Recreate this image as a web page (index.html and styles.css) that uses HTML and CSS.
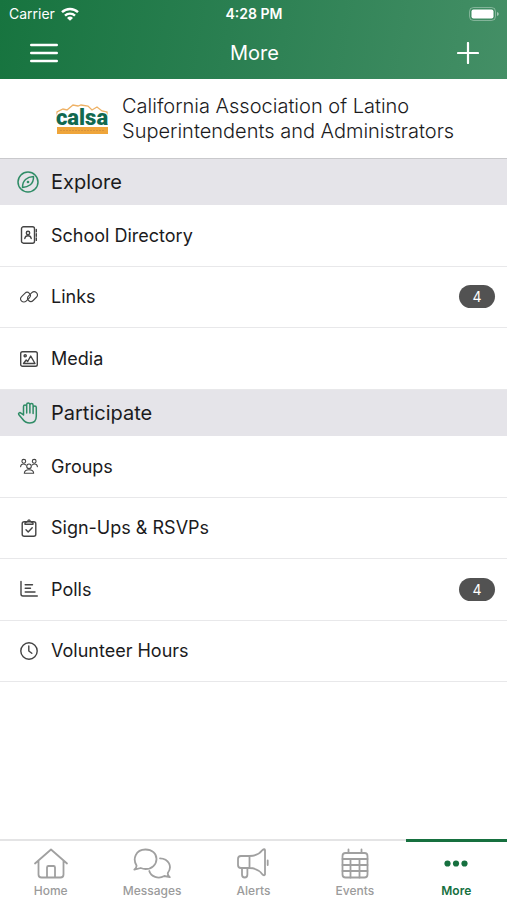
FILE: index.html
```html
<!DOCTYPE html>
<html lang="en">
<head>
<meta charset="utf-8">
<meta name="viewport" content="width=device-width, initial-scale=1">
<title>More</title>
<link rel="stylesheet" href="styles.css">
</head>
<body>
<header class="top">
  <div class="status">
    <span class="carrier">Carrier
      <svg class="wifi" viewBox="0 0 18 14" aria-hidden="true"><g fill="none" stroke="#fff" stroke-width="2.4"><path d="M1 5.2a11.500 11.500 0 0 1 16 0"/><path d="M4 8.600a7.200 7.200 0 0 1 10 0"/></g><path d="M9 13.800 6 11a4.300 4.300 0 0 1 6 0z" fill="#fff"/></svg>
    </span>
    <span class="time">4:28 PM</span>
    <svg class="battery" viewBox="0 0 30 14" aria-hidden="true"><rect x=".5" y=".5" width="26" height="13" rx="4" fill="none" stroke="#fff" stroke-opacity=".35"/><rect x="2.500" y="2.500" width="22" height="9" rx="2" fill="#fff"/><path d="M28 5v4q1.800-.6 1.800-2T28 5z" fill="#fff" fill-opacity=".5"/></svg>
  </div>
  <div class="bar">
    <button class="bar-btn" type="button" aria-label="Menu"><svg class="burger" viewBox="0 0 28 20"><path d="M1.200 2h25.600M1.200 10h25.600M1.200 18h25.600" stroke="#fff" stroke-width="2.400" stroke-linecap="round"/></svg></button>
    <h1 class="title">More</h1>
    <button class="bar-btn" type="button" aria-label="Add"><svg class="plus" viewBox="0 0 22 22"><path d="M11 1v20M1 11h20" stroke="#fff" stroke-width="2.200" stroke-linecap="round"/></svg></button>
  </div>
</header>
<main class="content">
  <div class="org">
    <svg class="logo" viewBox="0 0 52 32" role="img" aria-label="calsa">
      <path d="M1 14V9l6-3 4 1 6-5 5 1 3-1 7 1 4 4 5-3 5 4 5 1v7" fill="none" stroke="#eeb165" stroke-width="1.300"/>
      <rect x="1" y="24" width="51" height="7" fill="#efa53a"/>
      <path d="M4 27.500h45" stroke="#d9933a" stroke-width="1.200" stroke-dasharray="2 1"/>
      <text class="logo-text" x="26" y="22" text-anchor="middle" stroke="#fff" stroke-width="2" paint-order="stroke">calsa</text>
    </svg>
    <p class="org-name">California Association of Latino Superintendents and Administrators</p>
  </div>
  <section>
    <h2 class="section-head"><svg class="head-icon" viewBox="0 0 22 22"><circle cx="11" cy="11" r="10"/><path d="M16.500 5.500c.2 4-.8 6.500-3.500 8.500-2.300 1.700-4.500 2.200-7.500 2.500 0-3.500.8-6 3-8s4.500-2.800 8-3z"/><circle cx="11" cy="11" r=".6"/></svg>Explore</h2>
    <ul class="list list-three">
      <li><a class="row" href="#directory"><svg class="icon" viewBox="0 0 18 18"><rect x="1.500" y=".8" width="13" height="16.400" rx="2"/><circle cx="8" cy="7" r="1.700"/><path d="M4.800 12.500c.3-2 1.500-2.800 3.200-2.800s2.900.8 3.200 2.800M16.300 3.500v2.400M16.300 7.800v2.400M16.300 12v2.400"/></svg><span class="label">School Directory</span></a></li>
      <li><a class="row" href="#links"><svg class="icon thin" viewBox="0 0 18 18"><rect x="0" y="6" width="11" height="6.400" rx="3.200" transform="rotate(-45 5.500 9.200)"/><rect x="7" y="5.400" width="11" height="6.400" rx="3.200" transform="rotate(-45 12.500 8.600)"/></svg><span class="label">Links</span><span class="badge">4</span></a></li>
      <li><a class="row" href="#media"><svg class="icon" viewBox="0 0 18 18"><rect x=".7" y="1.700" width="16.600" height="14.600" rx="1.800"/><circle cx="5.200" cy="5.800" r="1.100"/><path d="M3.500 13.500 6.200 10l1.500 1.500 3-5.500 4.300 7.500z"/></svg><span class="label">Media</span></a></li>
    </ul>
  </section>
  <section>
    <h2 class="section-head"><svg class="head-icon" viewBox="0 0 22 22"><path d="M6.500 13V4.500a1.600 1.600 0 0 1 3.200 0V11V2.600a1.600 1.600 0 0 1 3.200 0V11V3.200a1.600 1.600 0 0 1 3.200 0V11.500V5.600a1.600 1.600 0 0 1 3.200 0V14c0 4.500-2.500 7-6.500 7-3.500 0-5.500-1.300-7.500-4.200L1.700 12.500c-.7-1.600 1.200-2.500 2.300-1.300z"/></svg>Participate</h2>
    <ul class="list list-four">
      <li><a class="row" href="#groups"><svg class="icon thin" viewBox="0 0 18 18"><circle cx="9" cy="9.300" r="2.300"/><path d="M4.300 16.300c.2-2.700 1.800-3.500 4.700-3.500s4.500.8 4.700 3.500zM.6 9.800C.8 7.800 1.600 7 3.400 7c1 0 1.700.2 2.200.8M17.400 9.800c-.2-2-1-2.800-2.800-2.800-1 0-1.700.2-2.200.8"/><circle cx="3.800" cy="4.300" r="1.900"/><circle cx="14.200" cy="4.300" r="1.900"/></svg><span class="label">Groups</span></a></li>
      <li><a class="row" href="#signups"><svg class="icon" viewBox="0 0 18 18"><rect x="2.200" y="2.800" width="13.600" height="14.500" rx="2"/><path d="M5 5.300V3.800L7.500 2.500Q9-.8 10.500 2.500L13 3.800v1.500zM6 10.800l2.200 2.200 4-4.300"/></svg><span class="label">Sign-Ups &amp; RSVPs</span></a></li>
      <li><a class="row" href="#polls"><svg class="icon" viewBox="0 0 18 18"><path d="M1 1.500V14q0 2 2 2h14.300M5.200 4.800h7.300M5.200 8.300h5.300M5.200 12h9.800"/></svg><span class="label">Polls</span><span class="badge">4</span></a></li>
      <li><a class="row" href="#hours"><svg class="icon" viewBox="0 0 18 18"><circle cx="9" cy="9" r="8.200"/><path d="M8.800 4v5l3 2.300"/></svg><span class="label">Volunteer Hours</span></a></li>
    </ul>
  </section>
</main>
<nav class="tabs">
  <a class="tab" href="#home"><svg class="tab-icon" viewBox="0 0 38 32"><path d="M3 15.500 19 1.500l16 14M6.500 13v13.500q0 3 3 3h19q3 0 3-3V13M15 29.500v-10q0-1.500 1.500-1.500h5q1.500 0 1.500 1.500v10"/></svg>Home</a>
  <a class="tab" href="#messages"><svg class="tab-icon" viewBox="0 0 38 32"><path d="M3.500 17.500C-.5 11 2.500 1.500 12.500 1.500c6.500 0 11 4 11 9.500s-4.500 10-11 10c-2 0-3.300-.4-4.800-1L1.300 21.600q2.500-2 2.200-4.100zM27 10.300c9 .2 12.500 8.700 7.800 14.700q-.3 2.500 2 4.200l-5.500-1.200c-6 3.500-13.500.5-15-5"/></svg>Messages</a>
  <a class="tab" href="#alerts"><svg class="tab-icon" viewBox="0 0 38 32"><path d="M15.500 8H7Q4 8 4 11v6q0 3 3 3h8.500zM15.500 8c6 0 10-2 13-6q2-1.500 2.500 0v24.500q-.5 1.500-2.500 0c-3-4-7-6.500-13-6.500M8 20v6.500q0 3 2.700 3t2.700-3V20M33.700 12.500v4.500"/></svg>Alerts</a>
  <a class="tab" href="#events"><svg class="tab-icon" viewBox="0 0 38 32"><rect x="6.500" y="5" width="25" height="24.500" rx="3"/><path d="M12.500 1.500V5M25.500 1.500V5M6.500 11h25M6.500 17h25M6.500 23h25M14.500 11v18.500M23.500 11v18.500"/></svg>Events</a>
  <a class="tab active" href="#more" aria-current="page"><svg class="tab-icon dots" viewBox="0 0 38 32"><circle cx="10.500" cy="15.500" r="3.100"/><circle cx="19" cy="15.500" r="3.100"/><circle cx="27.500" cy="15.500" r="3.100"/></svg>More</a>
</nav>
</body>
</html>
```
FILE: styles.css
```css
* { box-sizing: border-box; }

body {
  margin: 0;
  min-height: 100vh;
  display: flex;
  flex-direction: column;
  background: #fff;
  color: #1b1b1d;
  font-family: Inter, "Liberation Sans", sans-serif;
}

svg { display: block; flex: none; }
a { color: inherit; text-decoration: none; }
h1, h2, p, ul { margin: 0; padding: 0; font-weight: 400; }

.top {
  color: #fff;
  background: linear-gradient(100deg, #17743f 0%, #2a7f51 45%, #448f66 100%);
}

.status {
  display: grid;
  grid-template-columns: 1fr auto 1fr;
  align-items: center;
  height: 27px;
  padding: 0 8px 0 9px;
  font-size: 14px;
}
.carrier { display: flex; align-items: center; gap: 6px; }
.wifi { width: 18px; height: 14px; }
.time { font-weight: 600; }
.battery { width: 30px; height: 14px; justify-self: end; }

.bar {
  display: grid;
  grid-template-columns: 1fr auto 1fr;
  align-items: center;
  height: 52px;
  padding: 0 28px 0 30px;
}
.bar-btn {
  display: flex;
  align-items: center;
  justify-self: start;
  height: 44px;
  padding: 0;
  border: 0;
  background: none;
}
.bar-btn:last-child { justify-self: end; }
.burger { width: 28px; height: 20px; }
.plus { width: 22px; height: 22px; }
.title { font-size: 20px; }

.content { flex: 1; }

.org {
  display: flex;
  align-items: center;
  gap: 14px;
  height: 80px;
  padding: 0 48px 0 56px;
  border-bottom: 1px solid #c9c9cc;
}
.logo { width: 52px; height: 32px; }
.logo-text {
  font: 900 22px Roboto, sans-serif;
  fill: #12694f;
}
.org-name { font-size: 20px; font-weight: 300; line-height: 25px; }

.section-head {
  display: flex;
  align-items: center;
  gap: 12px;
  height: 46px;
  padding-left: 17px;
  background: #e5e4e9;
  font-size: 20px;
}
.head-icon {
  width: 22px;
  height: 22px;
  fill: none;
  stroke: #2f8c66;
  stroke-width: 1.5;
  stroke-linejoin: round;
}

.list { display: grid; grid-auto-rows: 1fr; list-style: none; }
.list-three { min-height: 185px; }
.list-four { min-height: 246px; }

.row {
  display: flex;
  align-items: center;
  gap: 13px;
  height: 100%;
  padding: 0 12px 0 20px;
  border-bottom: 1px solid #e8e8ea;
  font-size: 18px;
}
.icon {
  width: 18px;
  height: 18px;
  fill: none;
  stroke: #444;
  stroke-width: 1.4;
  stroke-linecap: round;
  stroke-linejoin: round;
}
.thin { stroke-width: 1.1; }
.label { flex: 1; }
.badge {
  width: 36px;
  border-radius: 12px;
  background: #525252;
  color: #fff;
  font-size: 14px;
  line-height: 23px;
  text-align: center;
}

.tabs {
  display: grid;
  grid-template-columns: repeat(5, 1fr);
  height: 61px;
}
.tab {
  display: flex;
  flex-direction: column;
  align-items: center;
  gap: 3px;
  padding-top: 7px;
  border-top: 2px solid #e4e4e5;
  color: #9b9b9b;
  font-size: 12px;
  font-weight: 500;
  line-height: 16px;
}
.tab-icon {
  width: 38px;
  height: 32px;
  fill: none;
  stroke: #a0a0a0;
  stroke-width: 1.8;
  stroke-linecap: round;
  stroke-linejoin: round;
}
.active {
  padding-top: 6px;
  border-top: 3px solid #16703f;
  color: #16703f;
  font-weight: 600;
}
.dots { fill: #16703f; stroke: none; }
```
